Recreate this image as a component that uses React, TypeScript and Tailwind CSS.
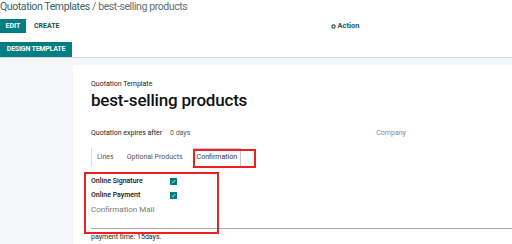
import React from 'react';

const Check: React.FC = () => (
  <span className="inline-flex h-[7px] w-[7px] items-center justify-center bg-[#017e84]">
    <svg viewBox="0 0 8 8" className="h-[5px] w-[5px]">
      <path d="M1.5 4.5 L3 6 L6.5 2" stroke="white" strokeWidth="1.3" fill="none" />
    </svg>
  </span>
);

const App: React.FC = () => {
  return (
    <div className="relative h-[244px] w-[512px] overflow-hidden bg-white font-['Roboto',sans-serif]">
      {/* control panel */}
      <div className="h-[58px] border-b border-[#d5d6e0]">
        <div className="pt-[1px] text-[10.5px] leading-[12px] tracking-[-0.4px] text-[#5f6e72]">
          <span className="text-[#3a5f66]">Quotation Templates</span> / best-selling products
        </div>
        <div className="mt-[6px] flex h-[14px] items-center">
          <button className="flex h-[14px] w-[26px] items-center justify-center bg-[#017e84] text-[7px] font-bold text-white">
            EDIT
          </button>
          <span className="ml-[8px] text-[7px] font-bold text-[#1d4f55]">CREATE</span>
          <div className="ml-[271px] flex items-center gap-[2px] text-[7.5px] font-bold text-[#1d5a60]">
            <svg viewBox="0 0 10 10" className="h-[5px] w-[5px]">
              <circle cx="5" cy="5" r="3.3" stroke="#1d5a60" strokeWidth="2.4" fill="none" />
            </svg>
            Action
          </div>
        </div>
        <button className="mt-[9px] flex h-[15px] w-[72px] items-center justify-center bg-[#017e84] text-[7px] font-bold tracking-[-0.2px] text-white">
          DESIGN TEMPLATE
        </button>
      </div>

      {/* sheet */}
      <div className="h-[186px] bg-[#f5f6f9] pl-[73px] pt-[7px]">
        <div className="h-full bg-white pl-[18px] pt-[15px]">
          <div className="text-[7px] leading-[8px] text-[#222]">Quotation Template</div>
          <div className="mt-[2px] text-[17px] font-medium leading-[20px] tracking-[-0.2px] text-[#111]">
            best-selling products
          </div>
          <div className="mt-[18px] flex h-[10px] items-center text-[7px]">
            <span className="w-[79px] text-[#222]">Quotation expires after</span>
            <span className="text-[#555]">0 days</span>
            <span className="ml-[186px] text-[#888]">Company</span>
          </div>
          <div className="mt-[10px] flex h-[18px] items-stretch border-l border-[#dcdde2] text-[7px] text-[#555]">
            <div className="flex items-center pl-[5px] pr-[13px]">Lines</div>
            <div className="flex items-center pr-[10px]">Optional Products</div>
            <div className="flex items-center border-x border-t border-[#c9c2d8] px-[3px] text-[#333]">Confirmation</div>
          </div>
          <div className="mt-[11px] flex flex-col gap-[6px] text-[7px]">
            <div className="flex h-[8px] items-center">
              <span className="w-[79px] font-medium text-[#111]">Online Signature</span>
              <Check />
            </div>
            <div className="flex h-[8px] items-center">
              <span className="w-[79px] font-medium text-[#111]">Online Payment</span>
              <Check />
            </div>
            <div className="mt-[1px] flex h-[8px] items-center text-[8px] text-[#777]">Confirmation Mail</div>
          </div>
          <div className="mt-[14px] border-t border-[#a9a7b0] pt-[3px] text-[7px] text-[#222]">payment time: 15days.</div>
        </div>
      </div>

      {/* annotation boxes */}
      <div className="absolute left-[193px] top-[149px] h-[19px] w-[63px] border-2 border-[#f02020]" />
      <div className="absolute left-[84px] top-[172px] h-[62px] w-[135px] border-2 border-[#f02020]" />
    </div>
  );
};

export default App;
